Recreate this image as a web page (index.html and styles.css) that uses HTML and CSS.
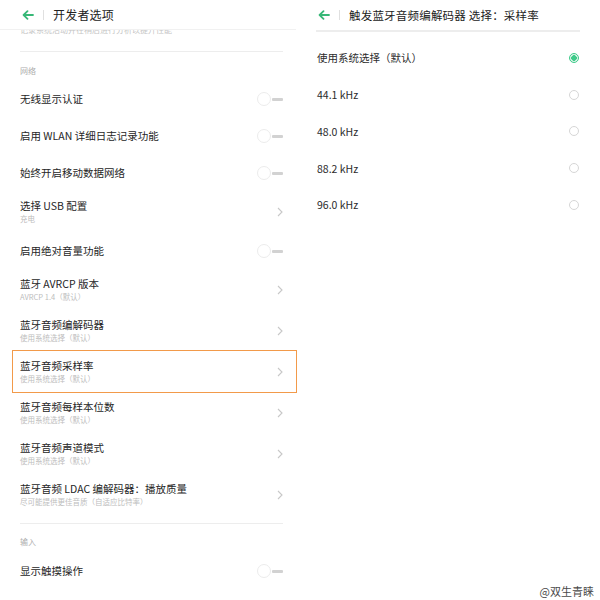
FILE: index.html
```html
<!DOCTYPE html>
<html lang="zh">
<head>
<meta charset="utf-8">
<title>开发者选项</title>
<link rel="stylesheet" href="styles.css">
</head>
<body>
<div class="screen">
  <section class="panel panel-left">
    <header class="bar">
      <svg class="back" width="12" height="10" viewBox="0 0 12 10"><path d="M11 5H1.8M5.5 1.2L1.6 5l3.9 3.8" fill="none" stroke="#37b877" stroke-width="1.8" stroke-linecap="round" stroke-linejoin="round"/></svg>
      <span class="vdiv"></span>
      <h1 class="title">开发者选项</h1>
    </header>
    <div class="clip"><p>记录系统活动并在稍后进行分析以提升性能</p></div>
    <div class="sep"></div>
    <div class="group">网络</div>

    <div class="row">
      <div class="label"><div class="t">无线显示认证</div></div>
      <span class="toggle"><span class="knob"></span><span class="track"></span></span>
    </div>
    <div class="row">
      <div class="label"><div class="t">启用 WLAN 详细日志记录功能</div></div>
      <span class="toggle"><span class="knob"></span><span class="track"></span></span>
    </div>
    <div class="row">
      <div class="label"><div class="t">始终开启移动数据网络</div></div>
      <span class="toggle"><span class="knob"></span><span class="track"></span></span>
    </div>
    <div class="row two">
      <div class="label"><div class="t">选择 USB 配置</div><div class="s">充电</div></div>
      <svg class="chev" width="6" height="10" viewBox="0 0 6 10"><path d="M1 1l4 4-4 4" fill="none" stroke="#c8c8c8" stroke-width="1.1"/></svg>
    </div>
    <div class="row">
      <div class="label"><div class="t">启用绝对音量功能</div></div>
      <span class="toggle"><span class="knob"></span><span class="track"></span></span>
    </div>
    <div class="row two">
      <div class="label"><div class="t">蓝牙 AVRCP 版本</div><div class="s">AVRCP 1.4（默认）</div></div>
      <svg class="chev" width="6" height="10" viewBox="0 0 6 10"><path d="M1 1l4 4-4 4" fill="none" stroke="#c8c8c8" stroke-width="1.1"/></svg>
    </div>
    <div class="row two">
      <div class="label"><div class="t">蓝牙音频编解码器</div><div class="s">使用系统选择（默认）</div></div>
      <svg class="chev" width="6" height="10" viewBox="0 0 6 10"><path d="M1 1l4 4-4 4" fill="none" stroke="#c8c8c8" stroke-width="1.1"/></svg>
    </div>
    <div class="row two marked">
      <div class="label"><div class="t">蓝牙音频采样率</div><div class="s">使用系统选择（默认）</div></div>
      <svg class="chev" width="6" height="10" viewBox="0 0 6 10"><path d="M1 1l4 4-4 4" fill="none" stroke="#c8c8c8" stroke-width="1.1"/></svg>
    </div>
    <div class="row two">
      <div class="label"><div class="t">蓝牙音频每样本位数</div><div class="s">使用系统选择（默认）</div></div>
      <svg class="chev" width="6" height="10" viewBox="0 0 6 10"><path d="M1 1l4 4-4 4" fill="none" stroke="#c8c8c8" stroke-width="1.1"/></svg>
    </div>
    <div class="row two">
      <div class="label"><div class="t">蓝牙音频声道模式</div><div class="s">使用系统选择（默认）</div></div>
      <svg class="chev" width="6" height="10" viewBox="0 0 6 10"><path d="M1 1l4 4-4 4" fill="none" stroke="#c8c8c8" stroke-width="1.1"/></svg>
    </div>
    <div class="row two">
      <div class="label"><div class="t">蓝牙音频 LDAC 编解码器：播放质量</div><div class="s">尽可能提供更佳音质（自适应比特率）</div></div>
      <svg class="chev" width="6" height="10" viewBox="0 0 6 10"><path d="M1 1l4 4-4 4" fill="none" stroke="#c8c8c8" stroke-width="1.1"/></svg>
    </div>

    <div class="sep sep-b"></div>
    <div class="group group-b">输入</div>
    <div class="row">
      <div class="label"><div class="t">显示触摸操作</div></div>
      <span class="toggle"><span class="knob"></span><span class="track"></span></span>
    </div>
  </section>

  <section class="panel panel-right">
    <header class="bar bar-right">
      <svg class="back" width="12" height="10" viewBox="0 0 12 10"><path d="M11 5H1.8M5.5 1.2L1.6 5l3.9 3.8" fill="none" stroke="#37b877" stroke-width="1.8" stroke-linecap="round" stroke-linejoin="round"/></svg>
      <span class="vdiv"></span>
      <h1 class="title">触发蓝牙音频编解码器 选择：采样率</h1>
    </header>
    <div class="options">
      <div class="opt"><span>使用系统选择（默认）</span><span class="radio on"></span></div>
      <div class="opt"><span>44.1 kHz</span><span class="radio"></span></div>
      <div class="opt"><span>48.0 kHz</span><span class="radio"></span></div>
      <div class="opt"><span>88.2 kHz</span><span class="radio"></span></div>
      <div class="opt"><span>96.0 kHz</span><span class="radio"></span></div>
    </div>
  </section>

  <div class="watermark">@双生青睐</div>
</div>
</body>
</html>
```

FILE: styles.css
```css
* { box-sizing: border-box; }
html, body { margin: 0; padding: 0; background: #fff; }
body {
  font-family: "Noto Sans CJK SC", "Noto Sans", sans-serif;
  color: #2b2b2b;
}
.screen {
  position: relative;
  width: 600px;
  height: 600px;
  overflow: hidden;
  display: flex;
}
.panel { width: 300px; flex: none; display: flex; flex-direction: column; }

.bar {
  height: 30px;
  display: flex;
  align-items: center;
  padding-left: 22px;
  border-bottom: 1px solid #f1f1f1;
  margin-right: 4px;
}
.back { flex: none; display: block; }
.vdiv { width: 1px; height: 10px; background: #e0e0e0; margin: 0 9px 0 9px; }
.title {
  margin: 0;
  font-size: 12px;
  font-weight: 400;
  color: #222;
  line-height: 16px;
  letter-spacing: 0.2px;
}

.clip { height: 5px; overflow: hidden; padding-left: 20px; }
.clip p {
  margin: -5px 0 0;
  font-size: 8px;
  line-height: 10px;
  color: #c4c4c4;
  white-space: nowrap;
}

.sep { margin: 16px 17px 0 20px; border-top: 1px solid #ededed; height: 0; }
.sep-b { margin-top: 7.5px; }
.group {
  height: 28.5px;
  padding: 14px 0 0 20px;
  font-size: 8px;
  line-height: 10px;
  color: #adadad;
}
.group-b { padding-top: 13px; }

.row {
  position: relative;
  height: 37px;
  padding: 0 17px 0 20px;
  display: flex;
  align-items: center;
  justify-content: space-between;
  flex: none;
}
.row.two { height: 41px; }
.row.marked::after {
  content: "";
  position: absolute;
  left: 12px;
  right: 3px;
  top: -2px;
  bottom: 0;
  border: 1.5px solid #f29a4a;
}
.label .t {
  font-size: 10.5px;
  line-height: 14px;
  color: #262626;
  white-space: nowrap;
}
.label .s {
  margin-top: 0;
  font-size: 7.5px;
  line-height: 12px;
  color: #bdbdbd;
  white-space: nowrap;
}
.chev { display: block; margin-right: 0; flex: none; }

.toggle { display: flex; align-items: center; flex: none; }
.knob {
  width: 14px;
  height: 14px;
  border-radius: 50%;
  border: 1px solid #ececec;
  background: #fff;
}
.track {
  width: 11px;
  height: 3px;
  margin-left: 1px;
  background: #d2d2d2;
  border-radius: 1px;
}

.bar-right {
  margin: 0 20px 0 16px;
  padding-left: 2px;
  height: 32px;
  border-bottom: 2px solid #ededed;
}
.bar-right .title { font-size: 11.5px; }
.options { margin-top: 7.5px; }
.opt {
  height: 36.75px;
  padding: 0 21px 0 17px;
  display: flex;
  align-items: center;
  justify-content: space-between;
  font-size: 10.5px;
  color: #2b2b2b;
}
.radio {
  width: 10px;
  height: 10px;
  border-radius: 50%;
  border: 1px solid #d6d6d6;
  background: #fff;
}
.radio.on {
  border: 1.5px solid #3ecb8a;
  background: radial-gradient(circle, #3ecb8a 0 2.6px, #dff5ea 3px);
}

.watermark {
  position: absolute;
  right: 6px;
  bottom: 2px;
  font-size: 11px;
  line-height: 14px;
  color: #4a4a4a;
  text-shadow: 0 0 1px #fff, 0 0 2px #fff;
}
```
